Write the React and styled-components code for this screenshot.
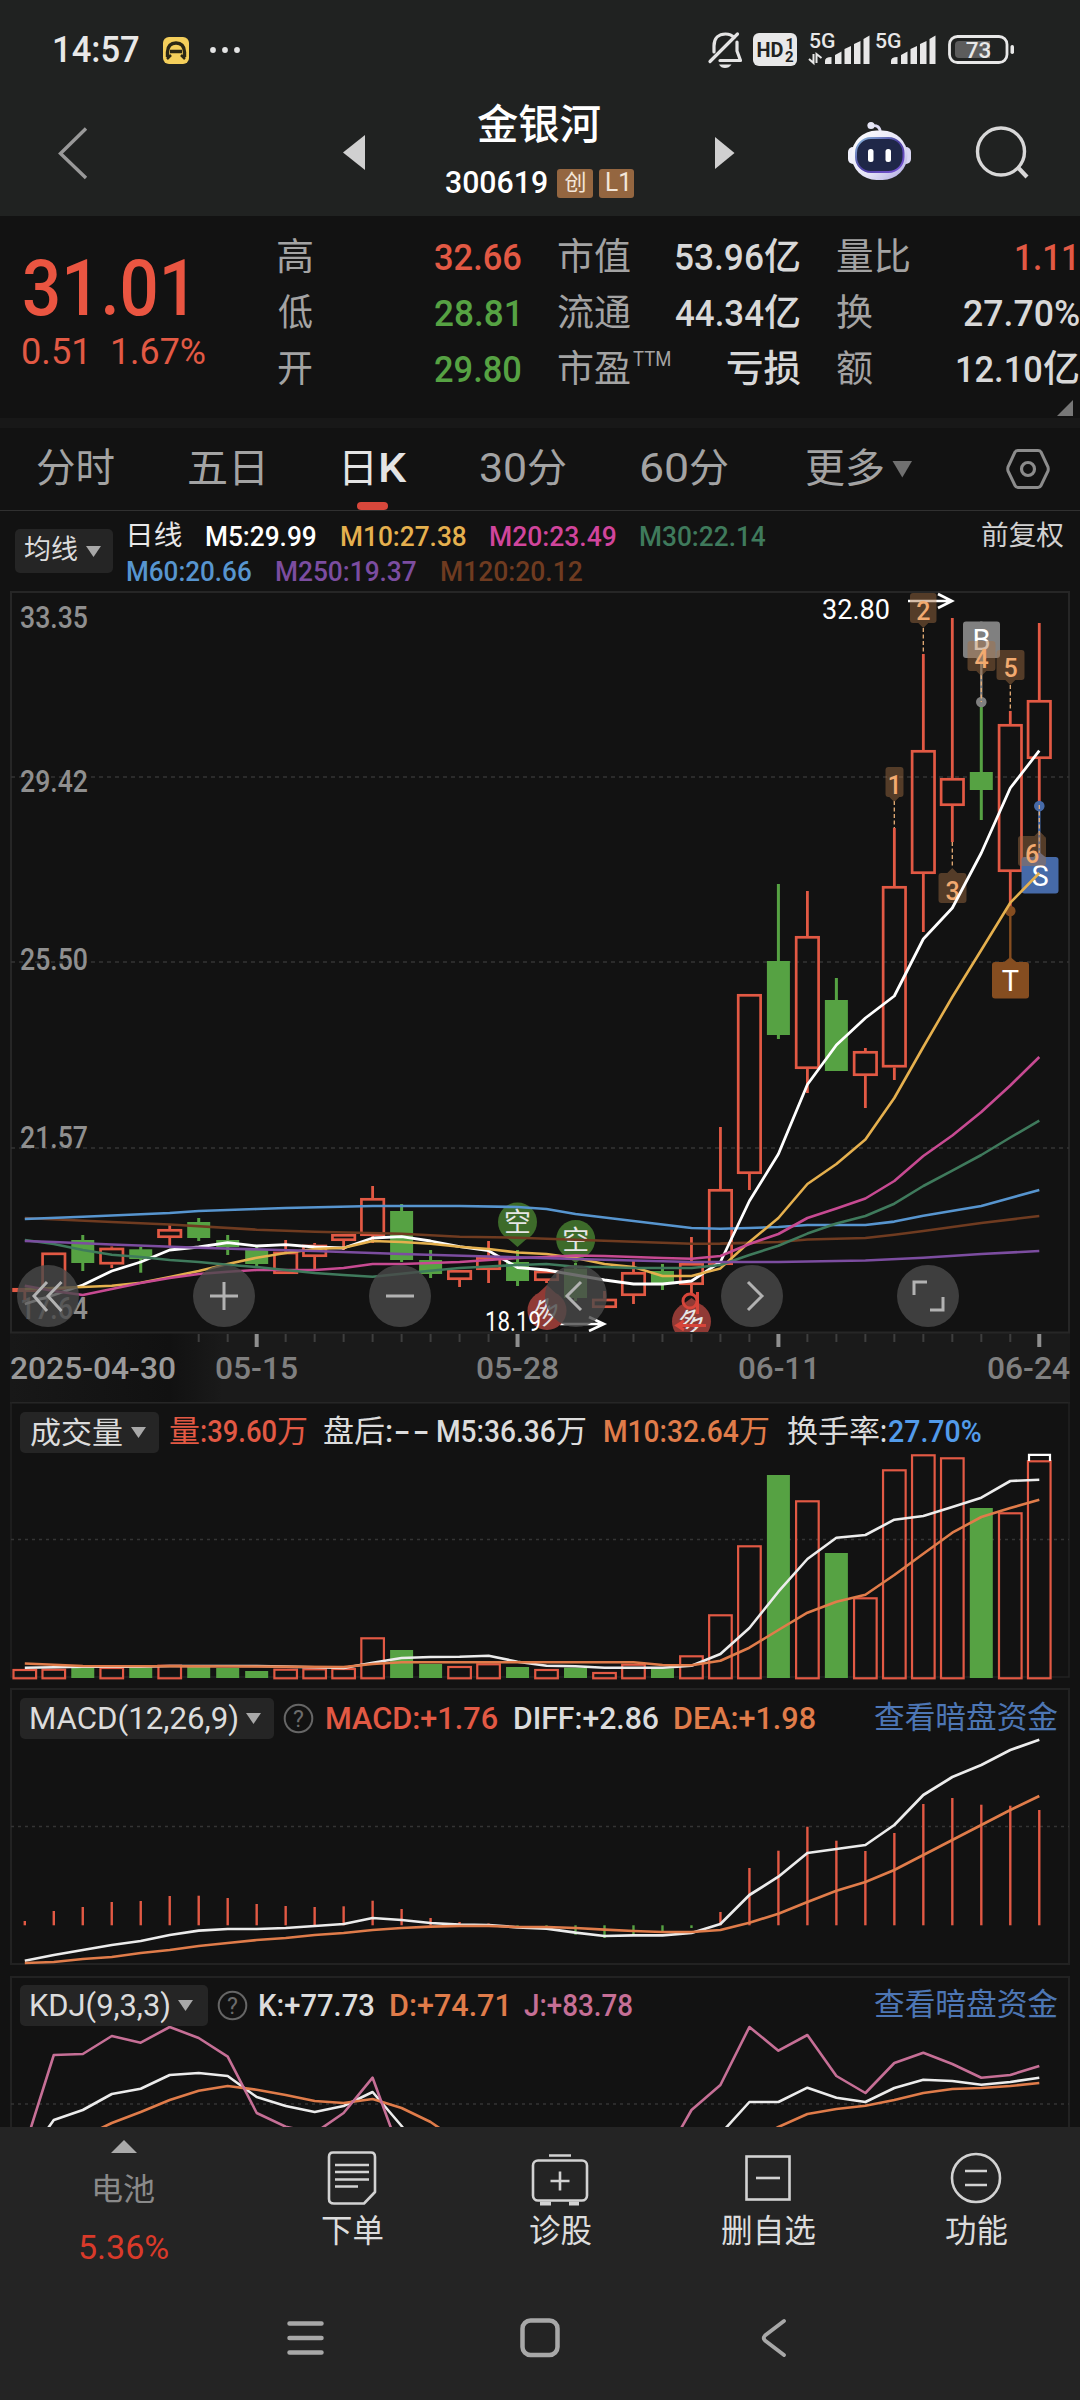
import React from "react";
import styled, { createGlobalStyle } from "styled-components";

const FONT = 'Roboto, "Noto Sans CJK SC", sans-serif';
const RED = "#e25944";
const GREEN = "#56a243";

const GlobalStyle = createGlobalStyle`
  * { box-sizing: border-box; }
  body { margin: 0; background: #121212; }
`;

/* ---------- text fitted to a given ink width ---------- */

const FitBox = styled.span`
  flex: none;
  width: ${(p) => p.$w}px;
  height: ${(p) => p.$size * 1.3}px;
  line-height: ${(p) => p.$size * 1.3}px;
  margin-left: ${(p) => p.$ml}px;
  margin-right: ${(p) => p.$mr}px;
  font-family: ${FONT};
  font-size: ${(p) => p.$size}px;
  color: ${(p) => p.$color};
  white-space: nowrap;
  display: flex;
`;
const Run = styled.span`
  display: block;
  flex: none;
  font-weight: ${(p) => p.$weight};
  transform-origin: 0 50%;
`;

const ctx = document.createElement("canvas").getContext("2d");
const isCjk = (s) => /[\u4e00-\u9fff]/.test(s);

function Txt({ w, size = 30, weight = 400, cjk = weight, color = "#dcdcdc", ml = 0, mr = 0, children }) {
  const runs = String(children).match(/[\u4e00-\u9fff]+|[^\u4e00-\u9fff]+/g);
  const allCjk = runs.every(isCjk);
  const m = runs.map((r, i) => {
    const wt = isCjk(r) ? cjk : weight;
    ctx.font = `${wt} ${size}px ${FONT}`;
    const t = ctx.measureText(r);
    const lead = i === 0 ? -t.actualBoundingBoxLeft : 0;
    const trail = i === runs.length - 1 ? t.width - t.actualBoundingBoxRight : 0;
    return { wt, a: t.width, lead, ink: t.width - lead - trail, flex: allCjk || !isCjk(r) };
  });
  const fixed = m.filter((x) => !x.flex).reduce((s, x) => s + x.ink, 0);
  const flex = m.filter((x) => x.flex).reduce((s, x) => s + x.ink, 0);
  const k = (w - fixed) / flex;
  const scale = (x) => (x.flex ? k : 1);
  return (
    <FitBox $w={w} $size={size} $color={color} $ml={ml} $mr={mr}>
      {runs.map((r, i) => (
        <Run
          key={i}
          $weight={m[i].wt}
          style={{
            width: m[i].a * scale(m[i]),
            marginLeft: -m[i].lead * scale(m[i]),
            transform: `scaleX(${scale(m[i])})`,
          }}
        >
          {r}
        </Run>
      ))}
    </FitBox>
  );
}

/* ---------- layout ---------- */

const Screen = styled.div`
  width: 1080px;
  height: 2400px;
  overflow: hidden;
  background: #121212;
  display: flex;
  flex-direction: column;
  font-family: ${FONT};
`;
const Top = styled.header`
  flex: none;
  height: 216px;
  background: #202221;
`;
const StatusBar = styled.div`
  height: 101px;
  display: flex;
  align-items: center;
  padding-left: 55px;
`;
const StatusArt = styled.svg`
  flex: none;
  display: block;
  margin-left: ${(p) => p.$ml}px;
`;
const TitleBar = styled.div`
  height: 115px;
  display: flex;
`;
const TitleIcon = styled.svg`
  flex: none;
  display: block;
  height: 115px;
`;
const TitleBlock = styled.div`
  width: 350px;
  display: flex;
  flex-direction: column;
`;
const TitleLine = styled.div`
  height: ${(p) => p.$h}px;
  padding-left: ${(p) => p.$pl}px;
  display: flex;
  align-items: center;
`;
const Badge = styled.span`
  width: ${(p) => p.$w}px;
  height: 29px;
  margin-left: ${(p) => p.$ml}px;
  border-radius: 3px;
  background: #946640;
  display: flex;
  align-items: center;
  justify-content: center;
`;

const Quote = styled.section`
  flex: none;
  height: 202px;
  display: flex;
`;
const PriceBlock = styled.div`
  width: 278px;
  padding-top: 23px;
`;
const PriceLine = styled.div`
  height: ${(p) => p.$h}px;
  display: flex;
  align-items: center;
`;
const StatColumn = styled.div`
  width: ${(p) => p.$w}px;
  margin-right: ${(p) => p.$mr}px;
  padding-top: 14px;
`;
const StatRow = styled.div`
  height: 56px;
  display: flex;
  justify-content: space-between;
  align-items: center;
`;
const StatLabel = styled.span`
  display: flex;
  align-items: flex-start;
`;
const CornerMark = styled.svg`
  display: block;
  margin: 2px 6px 0 auto;
`;
const Strip = styled.div`
  flex: none;
  height: 10px;
  background: #181818;
`;
const Tabs = styled.nav`
  flex: none;
  height: 83px;
  border-bottom: 1px solid #303030;
  display: flex;
`;
const Tab = styled.div`
  margin-left: ${(p) => p.$ml}px;
  height: 82px;
  padding-top: 15px;
  display: flex;
  flex-direction: column;
  align-items: center;
  justify-content: space-between;
`;
const TabMark = styled.i`
  width: 31px;
  height: 8px;
  border-radius: 4px;
  margin-right: 7px;
  background: #d8473b;
`;
const Legend = styled.div`
  flex: none;
  height: 80px;
  padding: 18px 0 0 15px;
  display: flex;
`;
const LegendRows = styled.div`
  margin-top: -11px;
`;
const LegendRow = styled.div`
  display: flex;
  align-items: center;
  height: ${(p) => p.$h}px;
`;
const Picker = styled.div`
  flex: none;
  width: ${(p) => p.$w}px;
  height: ${(p) => p.$h}px;
  padding-left: ${(p) => p.$pl}px;
  border-radius: 5px;
  background: #252525;
  display: flex;
  align-items: center;
`;
const Caret = styled.svg`
  flex: none;
  display: block;
  margin-left: 9px;
`;
const HelpMark = styled.svg`
  flex: none;
  display: block;
  margin-left: 9px;
`;
const Panel = styled.section`
  flex: none;
  position: relative;
  height: ${(p) => p.$h}px;
  display: grid;
  overflow: hidden;
  > * { grid-area: 1 / 1; }
`;
const PanelHead = styled.div`
  height: 41px;
  margin-top: ${(p) => p.$mt || 10}px;
  padding-left: 20px;
  display: flex;
  align-items: center;
`;
const Plot = styled.svg`
  display: block;
`;
const Controls = styled.div`
  position: absolute;
  left: 17px;
  top: 674px;
  display: flex;
  gap: 114px;
`;
const RoundButton = styled.button`
  width: 62px;
  height: 62px;
  padding: 0;
  border: 0;
  border-radius: 50%;
  background: rgba(74, 74, 74, 0.8);
  svg { display: block; }
`;
const Bottom = styled.footer`
  flex: none;
  height: 273px;
  background: #242424;
`;
const Actions = styled.div`
  height: 155px;
  display: flex;
`;
const Action = styled.div`
  width: ${(p) => p.$w || 208}px;
  display: flex;
  flex-direction: column;
  align-items: center;
  padding-top: ${(p) => p.$pt || 16}px;
  gap: ${(p) => p.$gap || 0}px;
  svg { display: block; }
`;
const NavKeys = styled.div`
  height: 118px;
  svg { display: block; }
`;

const Down = () => (
  <Caret width="15" height="11" viewBox="0 0 15 11">
    <path d="M0 0H15L7.5 11Z" fill="#a8a8a8" />
  </Caret>
);
const Help = () => (
  <HelpMark width="31" height="31" viewBox="0 0 31 31">
    <circle cx="15.5" cy="15.5" r="13.8" fill="none" stroke="#666" strokeWidth="2" />
    <text x="15.5" y="23.5" textAnchor="middle" fontSize="23" fill="#6c6c6c" fontFamily={FONT}>?</text>
  </HelpMark>
);

/* ---------- chart data ---------- */

const X = (i) => 24.8 + 28.985 * i;

/* [colour, body top, body bottom, wick top, wick bottom] */
const candles = [
  ["r", 1288, 1292, 1288, 1300], ["r", 1252.5, 1290, 1252.5, 1290], ["g", 1240, 1263, 1235, 1271],
  ["r", 1247.7, 1264.5, 1246.5, 1268], ["g", 1249.3, 1259, 1247, 1272.7], ["r", 1229, 1238, 1225, 1246],
  ["g", 1222, 1238, 1218, 1241], ["g", 1240, 1247, 1235, 1255], ["g", 1250, 1264, 1246, 1268],
  ["r", 1251.7, 1274, 1240, 1274], ["r", 1244.7, 1257, 1243, 1270], ["r", 1234, 1241, 1234, 1250],
  ["r", 1198, 1236, 1186, 1243], ["g", 1211, 1260, 1204, 1262], ["g", 1260, 1274, 1250, 1278],
  ["r", 1270, 1280, 1270, 1287], ["r", 1257, 1270, 1241, 1283], ["g", 1262, 1281, 1250, 1286],
  ["r", 1270.7, 1281, 1270.7, 1283], ["g", 1268.7, 1298, 1263, 1301], ["r", 1298.7, 1308, 1291, 1308],
  ["r", 1272, 1296, 1260, 1304], ["g", 1271, 1284, 1264, 1290], ["r", 1263, 1285, 1237, 1293],
  ["r", 1189, 1265, 1127, 1265], ["r", 994, 1174, 994, 1190], ["g", 961, 1035, 884, 1039],
  ["r", 936, 1069, 891, 1093], ["g", 1000, 1071, 978, 1071], ["r", 1051, 1076, 1048, 1108],
  ["r", 886, 1067.5, 828, 1080], ["r", 750, 874, 654, 932], ["r", 778, 806, 618, 842],
  ["g", 772, 790, 702, 820], ["r", 724, 872, 711, 910], ["r", 700, 759, 623, 805],
];

const M5 = [1304, 1295, 1285, 1271, 1262, 1250, 1247, 1242.7, 1246, 1244.7, 1247, 1248, 1238, 1236.7, 1241, 1246.7, 1250.7, 1267.5, 1270, 1275, 1280, 1284, 1284, 1281, 1262, 1201, 1154, 1084.5, 1045, 1018, 996, 939, 908, 853, 788, 750.7];
const M10 = [1289, 1288, 1287, 1285.7, 1282.7, 1277, 1271, 1264, 1257.7, 1253, 1249, 1247.7, 1241, 1242, 1243.7, 1246.7, 1249, 1252.5, 1254, 1258, 1264, 1267, 1276, 1276, 1268.4, 1242, 1218, 1184, 1164, 1139.6, 1098, 1047, 997, 950, 902.7, 873];
const M20 = [1285.7, 1291, 1295, 1289, 1283, 1278, 1274, 1271.7, 1270, 1270, 1270, 1268, 1264, 1264, 1263, 1262, 1260, 1258, 1257, 1255.5, 1256, 1257, 1258, 1258.7, 1256, 1244, 1234, 1218, 1208.5, 1198.5, 1181, 1156, 1135.5, 1112, 1085.5, 1057];
const M30 = [1240, 1244, 1250, 1254.7, 1257, 1260, 1262, 1264.7, 1267, 1270, 1273, 1275, 1276.7, 1273.7, 1270.7, 1268, 1266.5, 1265, 1264, 1266.7, 1267, 1268, 1268, 1268, 1265, 1255, 1245.7, 1233.6, 1223.6, 1216, 1203.7, 1186, 1170.6, 1155, 1137.5, 1120.7];
const M60 = { 0: 1219, 2: 1216.7, 5: 1213, 6: 1211, 8: 1209, 9: 1208, 12: 1206, 15: 1206, 17: 1207, 18: 1209, 19: 1214, 21: 1221, 23: 1228, 24: 1228.8, 25: 1228, 26: 1227, 27: 1225, 29: 1225, 30: 1221.6, 31: 1215.7, 33: 1206, 34: 1198, 35: 1190 };
const M250 = { 0: 1241, 1: 1242, 3: 1244.5, 6: 1247.7, 10: 1251, 13: 1254, 16: 1256.5, 19: 1259, 23: 1262, 26: 1262, 29: 1260.5, 31: 1257.7, 33: 1254, 35: 1251 };
const M120 = { 0: 1218, 3: 1222, 5: 1224.5, 8: 1229.7, 10: 1231.7, 13: 1233.7, 15: 1236.7, 17: 1237.7, 19: 1239.7, 23: 1243.7, 24: 1243.6, 26: 1242, 27: 1239.5, 29: 1238, 30: 1234.7, 31: 1231, 33: 1223, 35: 1216 };

const volumes = "r1669 r1668.7 g1668 r1667 g1667.3 r1664.7 g1666 g1668 g1671 r1668.7 r1668.3 r1668 r1637.3 g1650 g1664 r1666 r1663.3 g1667 r1669 g1667.7 r1672 r1663.7 g1668.3 r1655.3 r1614.3 r1545.3 g1475 r1500.3 g1553 r1597.3 r1469.3 r1454.3 r1457.3 g1508 r1512.3 r1460.3".split(" ");
const V5 = [1667.7, 1667.2, 1666.7, 1666.7, 1666.7, 1666, 1666, 1666, 1666, 1666.6, 1667.3, 1668, 1662.7, 1658, 1657, 1656.7, 1655.7, 1661.7, 1665.7, 1666.3, 1667.7, 1667.7, 1667.7, 1665.7, 1654, 1628, 1591.7, 1559, 1537.7, 1535, 1519.7, 1516, 1507, 1497.7, 1481, 1479.7];
const V10 = { 0: 1663.5, 2: 1666, 8: 1666.5, 11: 1667, 12: 1664, 13: 1662.3, 21: 1662.3, 22: 1665, 23: 1665.3, 24: 1660.7, 25: 1647.7, 26: 1630, 27: 1612.7, 28: 1601.7, 29: 1594.7, 30: 1575, 31: 1553.7, 32: 1532.7, 33: 1517, 34: 1508, 35: 1499.7 };

const hist = [1921, 1911, 1907, 1902, 1901, 1896, 1895.7, 1898, 1904, 1906, 1907, 1906.3, 1900.7, 1909, 1918, 1922, 1923.5, 1927, 1928, 1934.7, 1938, 1934, 1932.7, 1928, 1912, 1868, 1850.7, 1826.7, 1840.7, 1851, 1833, 1804, 1798, 1804.7, 1805.7, 1810];
const DIFF = [1960.7, 1955, 1950, 1945, 1941, 1935, 1930.7, 1929, 1929, 1928, 1926, 1924, 1918, 1920, 1923, 1924.7, 1925, 1927.3, 1928.7, 1932.7, 1936, 1935.3, 1935.3, 1933, 1924, 1895, 1876.7, 1853, 1849, 1845, 1825, 1795, 1777, 1765, 1750, 1739.7];
const DEA = [1963, 1962, 1959, 1957, 1953, 1950, 1946, 1943, 1940, 1938, 1935, 1933, 1930, 1928, 1926.7, 1926, 1926, 1927, 1927, 1928, 1929.7, 1931, 1932, 1932, 1930, 1922.7, 1913.7, 1902, 1890.7, 1882, 1870, 1855, 1840, 1825, 1810, 1796];

const K1 = [2161, 2120, 2110, 2094, 2088.7, 2075, 2073, 2076, 2097, 2106, 2112, 2106, 2092, 2126, 2165];
const K2 = { 24: 2134, 25: 2102, 26: 2102, 27: 2087.7, 28: 2097.7, 29: 2102, 30: 2088, 31: 2079.7, 32: 2081, 33: 2084.7, 34: 2082, 35: 2077.7 };
const D1 = { 2: 2137, 3: 2123, 4: 2112, 5: 2100, 6: 2090.7, 7: 2086, 8: 2089.7, 9: 2095, 10: 2101, 11: 2103, 12: 2099, 13: 2108, 14: 2122, 15: 2142 };
const D2 = { 25: 2142, 26: 2127, 27: 2114, 28: 2109, 29: 2105.7, 30: 2100, 31: 2093, 32: 2089, 33: 2088, 34: 2086, 35: 2083 };
const J1 = [2147, 2055, 2054, 2036, 2042.7, 2027, 2038, 2056.7, 2113, 2126.7, 2133, 2113, 2077.7, 2157];
const J2 = { 22: 2161, 23: 2110, 24: 2085, 25: 2027, 26: 2050.7, 27: 2035, 28: 2076, 29: 2093, 30: 2063, 31: 2052.7, 32: 2064, 33: 2077.7, 34: 2075, 35: 2066 };

const Line = ({ d, c, w = 2.2 }) => (
  <polyline
    points={Object.entries(d).map(([i, y]) => `${X(+i).toFixed(1)},${y}`).join(" ")}
    fill="none" stroke={c} strokeWidth={w} strokeLinejoin="round"
  />
);

const Label = ({ x, y, w, size = 31, color = "#8f8f8f", weight = 400, children }) => (
  <text x={x} y={y} textLength={w} lengthAdjust="spacingAndGlyphs" fontFamily={FONT} fontSize={size} fontWeight={weight} fill={color}>
    {children}
  </text>
);

const Grid = ({ y, dash = "4 4" }) => (
  <line x1="11" x2="1069" y1={y} y2={y} stroke="#343434" strokeWidth="1.3" strokeDasharray={dash} />
);

const Candle = ({ i, v }) => {
  const [c, t, b, wt, wb] = v;
  const x = X(i);
  if (c === "g")
    return (
      <g fill={GREEN}>
        <rect x={x - 1.5} y={wt} width="3" height={wb - wt} />
        <rect x={x - 11.5} y={t} width="23" height={b - t} />
      </g>
    );
  return (
    <g fill={RED} stroke="none">
      {t > wt && <rect x={x - 1.4} y={wt} width="2.8" height={t - wt} />}
      {wb > b && <rect x={x - 1.4} y={b} width="2.8" height={wb - b} />}
      <rect x={x - 11.2} y={t + 1.3} width="22.4" height={Math.max(1.4, b - t - 2.6)} fill="none" stroke={RED} strokeWidth="2.7" />
    </g>
  );
};

/* numbered pin: tip and dashed leader reach the candle's wick */
const Pin = ({ n, x, y, w, cx, up, from, to }) => (
  <g>
    <line x1={cx} x2={cx} y1={from} y2={to} stroke="#e8b078" strokeWidth="1.3" strokeDasharray="4 2.5" />
    <g fill="rgba(166,112,68,.45)">
      <path d={up
        ? `M${x + 3} ${y}H${cx - 5}L${cx} ${y - 5}L${cx + 5} ${y}H${x + w - 3}Q${x + w} ${y} ${x + w} ${y + 3}V${y + 27}Q${x + w} ${y + 30} ${x + w - 3} ${y + 30}H${x + 3}Q${x} ${y + 30} ${x} ${y + 27}V${y + 3}Q${x} ${y} ${x + 3} ${y}Z`
        : `M${x + 3} ${y}H${x + w - 3}Q${x + w} ${y} ${x + w} ${y + 3}V${y + 27}Q${x + w} ${y + 30} ${x + w - 3} ${y + 30}H${cx + 5}L${cx} ${y + 35}L${cx - 5} ${y + 30}H${x + 3}Q${x} ${y + 30} ${x} ${y + 27}V${y + 3}Q${x} ${y} ${x + 3} ${y}Z`} />
    </g>
    <text x={x + w / 2} y={y + 26.5} textAnchor="middle" fontSize="25" fontWeight="500" fontFamily={FONT} fill="#f2aa70">{n}</text>
  </g>
);

const Trade = ({ t, x, y, cx, dot, fill }) => (
  <g>
    <line x1={cx} x2={cx} y1={dot} y2={y} stroke={fill} strokeWidth="2.4" />
    <circle cx={cx} cy={dot} r="5.3" fill={fill} />
    <rect x={x} y={y} width="37" height="36.5" rx="3" fill={fill} />
    {dot < y
      ? <path d={`M${cx - 6} ${y}L${cx} ${y - 5}L${cx + 6} ${y}Z`} fill={fill} />
      : <path d={`M${cx - 6} ${y + 36}L${cx} ${y + 41}L${cx + 6} ${y + 36}Z`} fill={fill} />}
    <text x={x + 18.5} y={y + 28.5} textAnchor="middle" fontSize="29" fontFamily={FONT} fill="#fff">{t}</text>
  </g>
);

const Bubble = ({ cx, cy, t, fill, tip, rot = 0 }) => (
  <g>
    <circle cx={cx} cy={cy} r="19.5" fill={fill} />
    <path d={tip > cy ? `M${cx - 9} ${cy + 17}L${cx} ${tip}L${cx + 9} ${cy + 17}Z` : `M${cx - 9} ${cy - 17}L${cx} ${tip}L${cx + 9} ${cy - 17}Z`} fill={fill} />
    <text x={cx} y={cy + 10} textAnchor="middle" fontSize="27" fontFamily={FONT} fill="#e6e6e6" transform={`rotate(${rot} ${cx} ${cy})`}>{t}</text>
  </g>
);

function MainChart() {
  return (
    <Plot width="1080" height="811" viewBox="0 591 1080 811">
      <defs>
        <linearGradient id="fade" x1="0" x2="1" y1="0" y2="0">
          <stop offset="0" stopColor="#181818" />
          <stop offset=".75" stopColor="#111" />
          <stop offset="1" stopColor="#1a1a1a" />
        </linearGradient>
        <clipPath id="plot"><rect x="10" y="591" width="1060" height="741" /></clipPath>
      </defs>
      <rect x="10" y="1333" width="1060" height="69" fill="#1a1a1a" />
      <rect x="10" y="1333" width="212" height="69" fill="url(#fade)" />
      <rect x="11" y="592" width="1058" height="740.5" fill="none" stroke="#262626" strokeWidth="2" />
      <Grid y={777} /><Grid y={962} /><Grid y={1148} />
      {[["33.35", 628], ["29.42", 792], ["25.50", 970], ["21.57", 1148], ["17.64", 1319]].map(([t, y]) => (
        <Label key={t} x={20} y={y} w={68} weight={500}>{t}</Label>
      ))}
      <g clipPath="url(#plot)">
        {candles.map((v, i) => <Candle key={i} i={i} v={v} />)}
        <g stroke="#fff" strokeWidth="2.6" fill="none">
          <path d="M908 601H952M938 594L952 601L938 608" />
          <path d="M560 1324H604M589 1317L604 1324L589 1331" />
        </g>
        <Trade t="B" x={963} y={621.5} cx={981.3} dot={702} fill="#808080" />
        <Trade t="S" x={1021.5} y={857} cx={1039.3} dot={806} fill="#466aa8" />
        <Trade t="T" x={992} y={962} cx={1010.3} dot={911} fill="#854d20" />
        <Pin n="1" x={885.5} y={767} w={18} cx={894.3} from={801} to={828} />
        <Pin n="2" x={910} y={593} w={26.5} cx={923.3} from={628} to={654} />
        <Pin n="3" x={938.5} y={873} w={28} cx={952.3} up from={842} to={868} />
        <Pin n="4" x={967.5} y={641} w={28} cx={981.3} from={675} to={702} />
        <Pin n="5" x={996.5} y={650} w={28} cx={1010.3} from={685} to={711} />
        <Pin n="6" x={1018} y={836} w={28} cx={1039.3} up from={805} to={853} />
        <Bubble cx={517.5} cy={1222} t="空" fill="#3d6b2a" tip={1247} />
        <Bubble cx={575.7} cy={1239.5} t="空" fill="#3d6b2a" tip={1263} />
        <Bubble cx={547} cy={1310.5} t="多" fill="#903a35" tip={1285} rot={-32} />
        <Bubble cx={691.5} cy={1321.5} t="多" fill="#903a35" tip={1298} rot={-20} />
        <g fill="none" stroke="#d8453a" strokeWidth="3">
          <circle cx="690" cy="1301" r="7" />
          <path d="M697.5 1292V1314M678 1325.5H706M684 1321L677 1325.5L684 1330" />
        </g>
        <Line d={M120} c="#6f3b20" w={2.6} />
        <Line d={M60} c="#5795cf" w={2.6} />
        <Line d={M5} c="#fff" w={2.8} />
        <Line d={M10} c="#e5b04e" w={2.6} />
        <Line d={M20} c="#c74a92" w={2.6} />
        <Line d={M30} c="#3f7a5c" w={2.6} />
        <Line d={M250} c="#7c4da0" w={2.6} />
      </g>
      <Label x={822} y={618.5} w={68} size={27.5} color="#fff">32.80</Label>
      <Label x={485} y={1331} w={56} size={27.5} color="#fff">18.19</Label>
      {Array.from({ length: 30 }, (_, k) => k + 6).map((i) => {
        const big = i % 9 === 8;
        return <rect key={i} x={X(i) - (big ? 2 : 1)} y="1334" width={big ? 4 : 2} height={big ? 13 : 8} fill={big ? "#8f8f8f" : "#3e3e3e"} />;
      })}
      <Label x={10} y={1379} w={166} weight={500} color="#9a9a9a">2025-04-30</Label>
      <Label x={215} y={1379} w={83} weight={500} color="#808080">05-15</Label>
      <Label x={476} y={1379} w={83} weight={500} color="#808080">05-28</Label>
      <Label x={738} y={1379} w={82} weight={500} color="#808080">06-11</Label>
      <Label x={987} y={1379} w={83} weight={500} color="#808080">06-24</Label>
    </Plot>
  );
}

const icons = [
  "M30 17L17 31L30 46M44.5 17L31 31L44.5 46",
  "M17 31H45M31 17V45",
  "M17 31H45",
  "M36 17L22 31L36 45",
  "M27 17L41 31L27 45",
  "M17 30V17H30M46 32V45H33",
];

function VolumePlot() {
  return (
    <Plot width="1080" height="286" viewBox="0 1402 1080 286">
      <path d="M10 1402.5H1070" stroke="#262626" strokeWidth="2" />
      <path d="M11 1402V1677H1069V1402" fill="none" stroke="#222" strokeWidth="1.5" />
      <Grid y={1539.5} dash="3 4" />
      {volumes.map((v, i) => {
        const y = +v.slice(1);
        return v[0] === "g"
          ? <rect key={i} x={X(i) - 11.5} y={y} width="23" height={1678 - y} fill={GREEN} />
          : <rect key={i} x={X(i) - 11.3} y={y + 1} width="22.6" height={1677.3 - y} fill="none" stroke={RED} strokeWidth="2.2" />;
      })}
      <path d="M1029 1461V1454.8H1050V1461" fill="none" stroke="#fff" strokeWidth="2.2" />
      <Line d={V5} c="#ececec" w={2.6} />
      <Line d={V10} c="#e07c4a" w={2.6} />
    </Plot>
  );
}

function MacdPlot() {
  return (
    <Plot width="1080" height="288" viewBox="0 1688 1080 288">
      <rect x="11" y="1689" width="1058" height="275" fill="none" stroke="#222" strokeWidth="2" />
      <Grid y={1826.5} dash="3 4" />
      {hist.map((y, i) => (
        <line key={i} x1={X(i)} x2={X(i)} y1={y} y2="1925.3" stroke={y > 1925.3 ? GREEN : RED} strokeWidth="2.4" />
      ))}
      <Line d={DIFF} c="#ececec" w={2.7} />
      <Line d={DEA} c="#e07c4a" w={2.7} />
    </Plot>
  );
}

function KdjPlot() {
  return (
    <Plot width="1080" height="151" viewBox="0 1976 1080 151">
      <path d="M11 2127V1977H1069V2127" fill="none" stroke="#222" strokeWidth="2" />
      <Grid y={2104} dash="3 4" />
      <Line d={K1} c="#ececec" w={2.6} /><Line d={K2} c="#ececec" w={2.6} />
      <Line d={D1} c="#e07c4a" w={2.6} /><Line d={D2} c="#e07c4a" w={2.6} />
      <Line d={J1} c="#c66f96" w={2.6} /><Line d={J2} c="#c66f96" w={2.6} />
    </Plot>
  );
}

const Bars = ({ x }) => (
  <path
    d={`M${x} 64V61Q${x} 57 ${x + 6.5} 57V64ZM${x + 10} 64V55L${x + 16.5} 51.5V64ZM${x + 19.5} 64V49L${x + 26} 46V64ZM${x + 29} 64V44L${x + 35.5} 41V64ZM${x + 38.5} 64V39L${x + 44.5} 35.5V64Z`}
    fill="#e8e8e8"
  />
);

const StatusIcons = () => (
  <StatusArt $ml={460} width="380" height="101" viewBox="700 0 380 101">
    <g fill="none" stroke="#e4e4e4" strokeWidth="3.2" strokeLinejoin="round" strokeLinecap="round">
      <path d="M714 52V46C714 38 719 34 725.5 34C729 34 732 35.2 734 37.5" />
      <path d="M737 42V51L740.5 60.5H720" />
      <path d="M737.5 34L710 61.5" />
    </g>
    <path d="M719 64.5H731.5Q729 68 725 68T719 64.5Z" fill="#e4e4e4" />
    <rect x="753" y="33" width="44" height="33" rx="6" fill="#e8e8e8" />
    <text x="756.5" y="56.5" fontFamily={FONT} fontWeight="700" fontSize="20.5" textLength="27" lengthAdjust="spacingAndGlyphs" fill="#202221">HD</text>
    <text x="785.5" y="48.500" fontFamily={FONT} fontWeight="700" fontSize="15.5" fill="#202221">1</text>
    <text x="785" y="62" fontFamily={FONT} fontWeight="700" fontSize="15" fill="#202221">2</text>
    {[809, 875].map((x) => (
      <text key={x} x={x} y="48" fontFamily={FONT} fontWeight="500" fontSize="20.5" textLength="26.5" lengthAdjust="spacingAndGlyphs" fill="#e8e8e8">5G</text>
    ))}
    <path d="M809 59L813.5 63V54M816.500 63V54L821.5 58" fill="none" stroke="#e8e8e8" strokeWidth="2" />
    <Bars x={825} /><Bars x={891} />
    <rect x="949.5" y="36.5" width="57.5" height="26" rx="8" fill="none" stroke="#e8e8e8" strokeWidth="2.8" />
    <path d="M959 41H990V58H959Q955 58 955 54V45Q955 41 959 41Z" fill="#5c5c5c" />
    <text x="978.5" y="57.5" textAnchor="middle" fontFamily={FONT} fontWeight="500" fontSize="22.500" fill="#e8e8e8">73</text>
    <rect x="1010.5" y="45" width="3.5" height="9" rx="1.7" fill="#e8e8e8" />
  </StatusArt>
);

const Robot = () => (
  <g>
    <defs>
      <linearGradient id="shell" x1="0" x2="1" y1="0" y2="1">
        <stop offset="0" stopColor="#fff" /><stop offset=".6" stopColor="#e3e2f6" /><stop offset="1" stopColor="#a9a3e0" />
      </linearGradient>
      <linearGradient id="rim" x1="0" x2="1" y1="0" y2="1">
        <stop offset="0" stopColor="#8fbfe0" /><stop offset=".5" stopColor="#4b3fa0" /><stop offset="1" stopColor="#7a55d8" />
      </linearGradient>
    </defs>
    <path d="M871 126Q880 124 880.5 133" fill="none" stroke="#dcdaf2" strokeWidth="2.8" />
    <circle cx="871" cy="125.5" r="3.6" fill="#e6e6f6" />
    <rect x="848" y="147" width="10" height="17" rx="5" fill="#f0f0fb" />
    <rect x="901" y="147" width="10" height="17" rx="5" fill="#d9d6f3" />
    <rect x="851.5" y="130.5" width="56" height="49.5" rx="25" fill="url(#shell)" />
    <rect x="856" y="138" width="47.5" height="34" rx="15" fill="#1f2748" stroke="url(#rim)" strokeWidth="2" />
    <rect x="868" y="149" width="5.5" height="13" rx="2.5" fill="#fff" />
    <rect x="885.5" y="149" width="5.5" height="13" rx="2.5" fill="#fff" />
  </g>
);

const Stat = ({ label, lw, value, vw, color = "#d8d8d8", sup, mr }) => (
  <StatRow>
    <StatLabel>
      <Txt w={lw} size={37} color="#a3a3a3">{label}</Txt>
      {sup && <Txt w={37} size={20} ml={3} color="#a3a3a3">{sup}</Txt>}
    </StatLabel>
    <Txt w={vw} size={37} weight={500} color={color} mr={mr}>{value}</Txt>
  </StatRow>
);

const stroke = { fill: "none", stroke: "#d2d2d2", strokeWidth: 2.6 };

const Val = (p) => <Txt size={31} weight={500} cjk={400} {...p} />;

export default function App() {
  return (
    <Screen>
      <GlobalStyle />
      <Top>
        <StatusBar>
          <Txt w={84} size={37} weight={500} color="#e8e8e8">14:57</Txt>
          <StatusArt $ml={16} width="85" height="101" viewBox="155 0 85 101">
            <rect x="163" y="37" width="26" height="27" rx="6" fill="#f4cf5b" />
            <path d="M167.5 57V52Q168 43 176 43T184.5 52V57M170 51.5H182" fill="none" stroke="#2b2715" strokeWidth="3.4" />
            <path d="M167 59L171 55M185 59L181 55" stroke="#2b2715" strokeWidth="2.5" />
            <g fill="#e4e4e4"><circle cx="213" cy="50" r="2.9" /><circle cx="225" cy="50" r="2.9" /><circle cx="237" cy="50" r="2.9" /></g>
          </StatusArt>
          <StatusIcons />
        </StatusBar>
        <TitleBar>
          <TitleIcon width="365" viewBox="0 101 365 115">
            <path d="M86 128.5L60.5 153.5L86 178" fill="none" stroke="#999" strokeWidth="3.4" />
            <path d="M365 135L343 152.5L365 170Z" fill="#d0d0d0" />
          </TitleIcon>
          <TitleBlock>
            <TitleLine $h={49} $pl={113}>
              <Txt w={122} size={41} weight={500} color="#fff">金银河</Txt>
            </TitleLine>
            <TitleLine $h={71} $pl={81}>
              <Txt w={101} size={32} weight={500} color="#fff">300619</Txt>
              <Badge $w={36} $ml={10}><Txt w={21} size={22} color="#f3e7da">创</Txt></Badge>
              <Badge $w={35} $ml={6}><Txt w={20} size={25} color="#f3e7da">L1</Txt></Badge>
            </TitleLine>
          </TitleBlock>
          <TitleIcon width="365" viewBox="715 101 365 115">
            <path d="M715 137L734.5 153L715 169Z" fill="#d0d0d0" />
            <Robot />
            <g fill="none" stroke="#d8d8d8" strokeWidth="3.4">
              <circle cx="1001" cy="151.5" r="23.5" /><path d="M1017.5 167L1027 177" strokeWidth="4.2" />
            </g>
          </TitleIcon>
        </TitleBar>
      </Top>

      <Quote>
        <PriceBlock>
          <PriceLine $h={100}><Txt w={161} size={77} weight={500} color="#ea5541" ml={24}>31.01</Txt></PriceLine>
          <PriceLine $h={26}>
            <Txt w={62} size={37} color={RED} ml={23}>0.51</Txt>
            <Txt w={92} size={37} color={RED} ml={28}>1.67%</Txt>
          </PriceLine>
        </PriceBlock>
        <StatColumn $w={243} $mr={37}>
          <Stat label="高" lw={34} value="32.66" vw={86} color={RED} />
          <Stat label="低" lw={34} value="28.81" vw={82} mr={4} color={GREEN} />
          <Stat label="开" lw={34} value="29.80" vw={86} color={GREEN} />
        </StatColumn>
        <StatColumn $w={242} $mr={37}>
          <Stat label="市值" lw={72} value="53.96亿" vw={124} />
          <Stat label="流通" lw={72} value="44.34亿" vw={124} />
          <Stat label="市盈" lw={72} value="亏损" vw={73} sup="TTM" />
        </StatColumn>
        <StatColumn $w={242} $mr={0}>
          <Stat label="量比" lw={72} value="1.11" vw={57} mr={5} color={RED} />
          <Stat label="换" lw={35} value="27.70%" vw={115} />
          <Stat label="额" lw={35} value="12.10亿" vw={121} />
          <CornerMark width="16" height="16"><path d="M16 0V16H0Z" fill="#777" /></CornerMark>
        </StatColumn>
      </Quote>
      <Strip />

      <Tabs>
        <Tab $ml={37}><Txt w={77} size={40} color="#a3a3a3">分时</Txt></Tab>
        <Tab $ml={75}><Txt w={74} size={40} color="#a3a3a3">五日</Txt></Tab>
        <Tab $ml={82}><Txt w={62} size={40} weight={500} cjk={400} color="#e4e4e4">日K</Txt><TabMark /></Tab>
        <Tab $ml={73}><Txt w={86} size={40} color="#a3a3a3">30分</Txt></Tab>
        <Tab $ml={75}><Txt w={87} size={40} color="#a3a3a3">60分</Txt></Tab>
        <Tab $ml={78}><Txt w={77} size={40} color="#a3a3a3">更多</Txt></Tab>
        <svg width="190" height="82" viewBox="883 428 190 82">
          <path d="M892.5 461H912L902.3 477.5Z" fill="#707070" />
          <path d="M1018 450.5H1038Q1040 450.5 1041 452L1048 467Q1048.5 469 1048 471L1041 485.5Q1040 487.5 1038 487.5H1018Q1016 487.5 1015 485.5L1008 471Q1007.5 469 1008 467L1015 452Q1016 450.5 1018 450.5Z" fill="none" stroke="#8c8c8c" strokeWidth="3" />
          <circle cx="1028" cy="469" r="6.5" fill="none" stroke="#8c8c8c" strokeWidth="3.2" />
        </svg>
      </Tabs>

      <Legend>
        <Picker $w={98} $h={44} $pl={9}><Txt w={53} size={27}>均线</Txt><Down /></Picker>
        <LegendRows>
          <LegendRow $h={38}>
            <Val w={52} size={27} ml={16} color="#e8e8e8">日线</Val>
            <Val w={109} size={28} ml={26} color="#fff">M5:29.99</Val>
            <Val w={124} size={28} ml={26} color="#e5b04e">M10:27.38</Val>
            <Val w={125} size={28} ml={25} color="#d0459c">M20:23.49</Val>
            <Val w={125} size={28} ml={25} color="#3f7a5c">M30:22.14</Val>
            <Val w={82} size={27} ml={216} color="#d0d0d0">前复权</Val>
          </LegendRow>
          <LegendRow $h={32}>
            <Val w={123} size={28} ml={15} color="#5795cf">M60:20.66</Val>
            <Val w={139} size={28} ml={26} color="#7c4da0">M250:19.37</Val>
            <Val w={140} size={28} ml={26} color="#6f3b20">M120:20.12</Val>
          </LegendRow>
        </LegendRows>
      </Legend>

      <Panel $h={811}>
        <MainChart />
        <Controls>
          {icons.map((d) => (
            <RoundButton key={d}>
              <svg width="62" height="62"><path d={d} fill="none" stroke="#b2b2b2" strokeWidth="3" /></svg>
            </RoundButton>
          ))}
        </Controls>
      </Panel>

      <Panel $h={286}>
        <VolumePlot />
        <PanelHead>
          <Picker $w={139} $h={41} $pl={11}><Txt w={91} size={30}>成交量</Txt><Down /></Picker>
          <Val w={137} ml={11} color={RED}>量:39.60万</Val>
          <Val w={68} ml={17}>盘后:</Val>
          <Val w={14} ml={4}>-</Val>
          <Val w={14} ml={5}>-</Val>
          <Val w={148} ml={9}>M5:36.36万</Val>
          <Val w={164} ml={19} color="#e07c4a">M10:32.64万</Val>
          <Val w={98} ml={19}>换手率:</Val>
          <Val w={92} ml={3} color="#529bea">27.70%</Val>
        </PanelHead>
      </Panel>

      <Panel $h={288}>
        <MacdPlot />
        <PanelHead>
          <Picker $w={254} $h={41} $pl={11}><Txt w={206} size={32}>MACD(12,26,9)</Txt><Down /></Picker>
          <Help />
          <Val w={170} size={32} ml={13} color={RED}>MACD:+1.76</Val>
          <Val w={143} size={32} ml={18}>DIFF:+2.86</Val>
          <Val w={140} size={32} ml={17} color="#e07c4a">DEA:+1.98</Val>
          <Txt w={183} size={31} ml={60} color="#4d76b4">查看暗盘资金</Txt>
        </PanelHead>
      </Panel>

      <Panel $h={151}>
        <KdjPlot />
        <PanelHead $mt={9}>
          <Picker $w={188} $h={41} $pl={11}><Txt w={138} size={32}>KDJ(9,3,3)</Txt><Down /></Picker>
          <Help />
          <Val w={114} size={32} ml={12}>K:+77.73</Val>
          <Val w={115} size={32} ml={17} color="#e07c4a">D:+74.71</Val>
          <Val w={108} size={32} ml={18} color="#c66f96">J:+83.78</Val>
          <Txt w={183} size={31} ml={243} color="#4d76b4">查看暗盘资金</Txt>
        </PanelHead>
      </Panel>

      <Bottom>
        <Actions>
          <Action $w={248} $pt={13} $gap={17}>
            <svg width="26" height="13"><path d="M0 13L13 0L26 13Z" fill="#aaa" /></svg>
            <Txt w={60} size={31} color="#8a8a8a">电池</Txt>
            <Txt w={88} size={33} color="#d93a2a">5.36%</Txt>
          </Action>
          <Action>
            <svg width="60" height="68" viewBox="0 0 60 68" {...stroke}>
              <path d="M11 9.5H49Q53 9.5 53 14V49L42 60.5H12Q7 60.5 7 56V14Q7 9.5 11 9.5Z" strokeLinejoin="round" />
              <path d="M13 22H47M13 29H47M13 36.5H47M13 43.5H36" />
            </svg>
            <Txt w={61} size={32}>下单</Txt>
          </Action>
          <Action>
            <svg width="60" height="68" viewBox="0 0 60 68" {...stroke}>
              <rect x="3" y="17.5" width="54" height="40" rx="5" />
              <path d="M19 12.5H41M30 28.5V47.5M20.5 38H39.5" />
              <path d="M10 60.5H21M39 60.5H49" strokeWidth="4" />
            </svg>
            <Txt w={61} size={32}>诊股</Txt>
          </Action>
          <Action>
            <svg width="60" height="68" viewBox="0 0 60 68" {...stroke}>
              <rect x="8.5" y="13.5" width="43" height="43" />
              <path d="M18 35H42" />
            </svg>
            <Txt w={93} size={32}>删自选</Txt>
          </Action>
          <Action>
            <svg width="60" height="68" viewBox="0 0 60 68" {...stroke}>
              <circle cx="30" cy="35" r="24" />
              <path d="M19 28H41M19 42H41" />
            </svg>
            <Txt w={61} size={32}>功能</Txt>
          </Action>
        </Actions>
        <NavKeys>
          <svg width="1080" height="118" viewBox="0 2282 1080 118" fill="none" stroke="#a8a8a8" strokeWidth="4.5" strokeLinecap="round">
            <path d="M289.5 2323.5H321.5M289.5 2338H321.5M289.5 2352.5H321.5" />
            <rect x="522.5" y="2320.5" width="35" height="34.5" rx="8" />
            <path d="M784 2321L765 2335.5Q762.5 2338 765 2340.5L784 2355" strokeWidth="3.8" />
          </svg>
        </NavKeys>
      </Bottom>
    </Screen>
  );
}
